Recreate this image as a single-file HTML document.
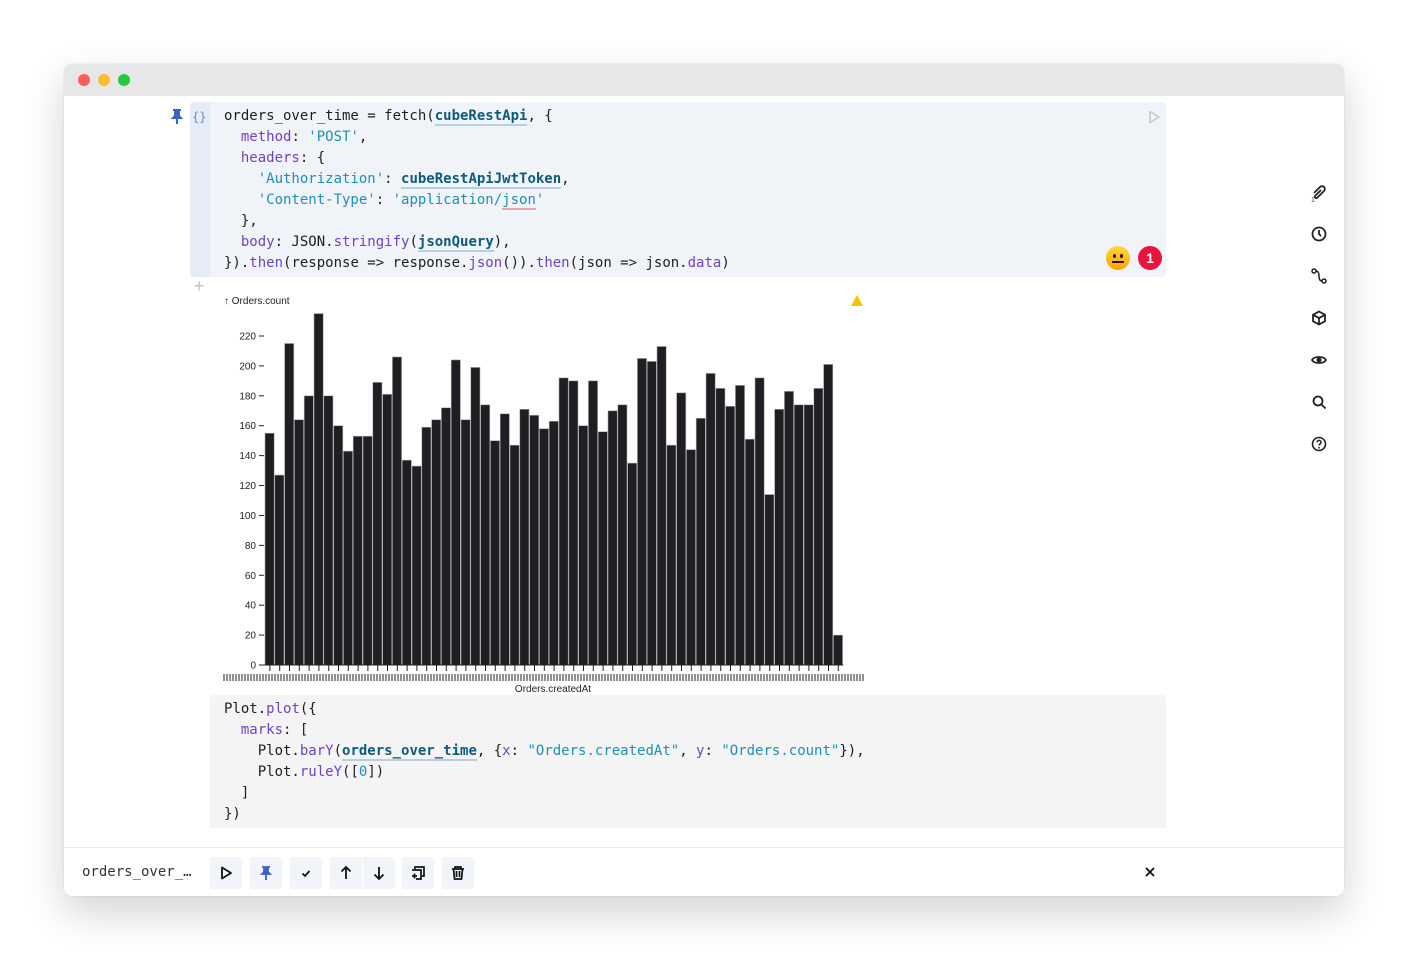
<!DOCTYPE html>
<html><head><meta charset="utf-8"><style>
body{margin:0;width:1408px;height:960px;background:#fff;position:relative;overflow:hidden;font-family:"Liberation Sans",sans-serif}
.win{position:absolute;left:64px;top:64px;width:1280px;height:832px;background:#fff;border-radius:8px;box-shadow:0 16px 40px rgba(0,0,0,.18),0 0 1px rgba(0,0,0,.2);overflow:hidden}
.tb{position:absolute;left:0;top:0;width:1280px;height:32px;background:#e7e7e7}
.dot{position:absolute;top:10px;width:12px;height:12px;border-radius:50%}
.code{font-family:"DejaVu Sans Mono","Liberation Mono",monospace;font-size:14px;line-height:21px;white-space:pre;position:absolute;color:#1b1e23}
.c1{position:absolute;left:126px;top:38px;width:976px;height:175px;background:#f0f4f8;border-radius:4px}
.g1{position:absolute;left:126px;top:38px;width:20px;height:175px;background:#e5ecf5;border-radius:4px 0 0 4px}
.c2{position:absolute;left:146px;top:631px;width:956px;height:133px;background:#f4f4f4;border-radius:3px}
.k{color:#6f42c1}.s{color:#1f8fb8}.v{color:#0c5a7d;font-weight:bold;border-bottom:2px solid #b8cfdd}.f{color:#6f42c1}
.bot{position:absolute;left:0;top:783px;width:1280px;height:49px;border-top:1px solid #ececec}
.btn{position:absolute;top:9px;width:32px;height:32px;background:#f1f4f8;border-radius:3px}
.btn svg{position:absolute;left:8px;top:8px}
.side svg{position:absolute;left:1247px}
</style></head><body>
<div class="win">
<div class="tb"><div class="dot" style="left:14px;background:#fe5f57"></div><div class="dot" style="left:34px;background:#febc2e"></div><div class="dot" style="left:54px;background:#28c840"></div></div>
<div class="c1"></div><div class="g1"></div>
<svg style="position:absolute;left:106px;top:45px" width="14" height="16" viewBox="0 0 14 16"><path d="M3 1h8M5 1v6l-2 2h8l-2-2V1M7 9v6" stroke="#3b63c4" stroke-width="2" fill="#3b63c4"/></svg>
<div class="code" style="left:128px;top:43px;color:#6a8bc0;font-size:12px">{}</div>
<div class="code" style="left:160px;top:42px">orders_over_time = fetch(<span class="v">cubeRestApi</span>, {
  <span class="k">method</span>: <span class="s">'POST'</span>,
  <span class="k">headers</span>: {
    <span class="s">'Authorization'</span>: <span class="v">cubeRestApiJwtToken</span>,
    <span class="s">'Content-Type'</span>: <span class="s">'application/<span style="border-bottom:2px solid #f4a0b0">json</span>'</span>
  },
  <span class="k">body</span>: JSON.<span class="f">stringify</span>(<span class="v">jsonQuery</span>),
}).<span class="f">then</span>(response =&gt; response.<span class="f">json</span>()).<span class="f">then</span>(json =&gt; json.<span class="f">data</span>)</div>
<svg style="position:absolute;left:1084px;top:46px" width="12" height="14"><path d="M2 1.5v11l9-5.5z" fill="none" stroke="#c8c8c8" stroke-width="1.6" stroke-linejoin="round"/></svg>
<div style="position:absolute;left:1042px;top:182px;width:24px;height:24px;border-radius:50%;background:linear-gradient(#ffd83b,#f7a600)"><div style="position:absolute;left:7px;top:8px;width:3px;height:4px;background:#402;border-radius:2px"></div><div style="position:absolute;left:14px;top:8px;width:3px;height:4px;background:#402;border-radius:2px"></div><div style="position:absolute;left:6px;top:15px;width:12px;height:2px;background:#402"></div></div>
<div style="position:absolute;left:1074px;top:182px;width:24px;height:24px;border-radius:50%;background:#e8143e;color:#fff;font-weight:bold;font-size:14px;text-align:center;line-height:24px">1</div>
<div style="position:absolute;left:130px;top:212px;color:#c0c0c0;font-size:18px">+</div>
<svg style="position:absolute;left:146px;top:226px" width="660" height="404" font-family="Liberation Sans,sans-serif" font-size="10" id="ch">
<text x="14" y="14" fill="#222">↑ Orders.count</text>
<path d="M641 16l6 -11 6 11z" fill="#f5c400"/>
<text x="343" y="402" fill="#222" text-anchor="middle">Orders.createdAt</text>
<g id="bars"></g><g id="ax" fill="#222" font-size="10"></g>
</svg>
<div class="c2"></div>
<div class="code" style="left:160px;top:635px">Plot.<span class="f">plot</span>({
  <span class="k">marks</span>: [
    Plot.<span class="f">barY</span>(<span class="v">orders_over_time</span>, {<span class="k">x</span>: <span class="s">"Orders.createdAt"</span>, <span class="k">y</span>: <span class="s">"Orders.count"</span>}),
    Plot.<span class="f">ruleY</span>([<span class="s">0</span>])
  ]
})</div>
<div class="side">
<svg style="top:120px" width="16" height="18" viewBox="0 0 16 18"><path d="M3 9l6-6a2.5 2.5 0 0 1 4 4l-7 7a1.5 1.5 0 0 1-2-2l6-6" fill="none" stroke="#222" stroke-width="1.8"/><text x="0" y="18" font-size="7" fill="#444">1</text></svg>
<svg style="top:162px" width="16" height="16"><circle cx="8" cy="8" r="6.5" fill="none" stroke="#222" stroke-width="1.8"/><path d="M8 4v4l2 2" fill="none" stroke="#222" stroke-width="1.8"/></svg>
<svg style="top:204px" width="16" height="16"><circle cx="3" cy="3" r="2" fill="none" stroke="#222" stroke-width="1.5"/><circle cx="13" cy="13" r="2" fill="none" stroke="#222" stroke-width="1.5"/><path d="M5 3c3 0 3 4 3 5s0 5 3 5" fill="none" stroke="#222" stroke-width="1.5"/></svg>
<svg style="top:246px" width="16" height="16"><path d="M8 1.5l6 3.3v6.4L8 14.5 2 11.2V4.8z M2 4.8l6 3.3 6-3.3M8 8.1v6.4" fill="none" stroke="#222" stroke-width="1.8"/></svg>
<svg style="top:288px" width="16" height="16"><path d="M1 8c2-4 12-4 14 0c-2 4-12 4-14 0z" fill="none" stroke="#222" stroke-width="1.8"/><circle cx="8" cy="8" r="2.5" fill="#222"/></svg>
<svg style="top:330px" width="16" height="16"><circle cx="7" cy="7" r="4.5" fill="none" stroke="#222" stroke-width="1.8"/><path d="M10.5 10.5l4 4" stroke="#222" stroke-width="1.8"/></svg>
<svg style="top:372px" width="16" height="16"><circle cx="8" cy="8" r="6.5" fill="none" stroke="#222" stroke-width="1.6"/><path d="M6 6.3a2 2 0 1 1 2.5 2c-.5.2-.5.7-.5 1.3" fill="none" stroke="#222" stroke-width="1.5"/><circle cx="8" cy="11.8" r=".9" fill="#222"/></svg>
</div>
<div class="bot">
<div class="code" style="left:18px;top:14px;color:#333">orders_over_…</div>
<div class="btn" style="left:146px"><svg width="16" height="16"><path d="M4 2.5v11l9-5.5z" fill="none" stroke="#111" stroke-width="1.8" stroke-linejoin="round"/></svg></div>
<div class="btn" style="left:186px"><svg width="16" height="16"><path d="M4 2h8M6 2v5l-2 2h8l-2-2V2M8 9v6" stroke="#3b63c4" stroke-width="1.8" fill="#3b63c4"/></svg></div>
<div class="btn" style="left:226px"><svg width="16" height="16"><path d="M4.5 8.5l2.5 2.5 4.5-5" fill="none" stroke="#111" stroke-width="1.8"/></svg></div>
<div class="btn" style="left:266px;width:65px"><svg width="16" height="16"><path d="M8 14V2M3.5 6.5L8 2l4.5 4.5" fill="none" stroke="#111" stroke-width="1.8"/></svg><div style="position:absolute;left:32px;top:0;width:1px;height:32px;background:#fff"></div><svg width="16" height="16" style="left:41px"><path d="M8 2v12M3.5 9.5L8 14l4.5-4.5" fill="none" stroke="#111" stroke-width="1.8"/></svg></div>
<div class="btn" style="left:338px"><svg width="16" height="16"><path d="M5 4V2h9v9h-2M2 5h9v9H6M2 11h5M4.5 8.5v5" fill="none" stroke="#111" stroke-width="1.7"/></svg></div>
<div class="btn" style="left:378px"><svg width="16" height="16"><path d="M2 4h12M5 4V2h6v2M3.5 4l1 10h7l1-10M6.5 6v6M9.5 6v6" fill="none" stroke="#111" stroke-width="1.7"/></svg></div>
<svg style="position:absolute;left:1080px;top:18px" width="12" height="12"><path d="M2 2l8 8M10 2l-8 8" stroke="#111" stroke-width="1.8"/></svg>
</div>
</div>
<script>
var v=[155,127,215,164,180,235,180,160,143,153,153,189,181,206,137,133,159,164,172,204,164,199,174,150,168,147,171,167,158,163,192,190,160,190,156,170,174,135,205,203,213,147,182,144,165,195,185,173,187,151,192,114,171,183,174,174,185,201,20];
var ns="http://www.w3.org/2000/svg",b=document.getElementById('bars'),ax=document.getElementById('ax');
var base=375,k=329/220,x0=55,st=9.8;
function el(t,a){var e=document.createElementNS(ns,t);for(var i in a)e.setAttribute(i,a[i]);return e}
v.forEach(function(h,i){var x=x0+i*st;b.appendChild(el('rect',{x:x,y:base-h*k,width:st-0.6,height:h*k,fill:'#1d1f23',stroke:'#aaa','stroke-width':0.6}));b.appendChild(el('line',{x1:x+st/2,x2:x+st/2,y1:base,y2:base+6,stroke:'#222','stroke-width':1}));});
b.appendChild(el('line',{x1:49,x2:x0+v.length*st,y1:base,y2:base,stroke:'#222','stroke-width':1}));
for(var y=0;y<=220;y+=20){var yy=base-y*k;b.appendChild(el('line',{x1:49,x2:54,y1:yy,y2:yy,stroke:'#222'}));var t=el('text',{x:46,y:yy+3.5,'text-anchor':'end'});t.textContent=y;ax.appendChild(t);}
for(var i=0;i<214;i++){b.appendChild(el('line',{x1:14+i*3,x2:14+i*3,y1:384,y2:391,stroke:'#222','stroke-width':1}));}
</script>
</body></html>
